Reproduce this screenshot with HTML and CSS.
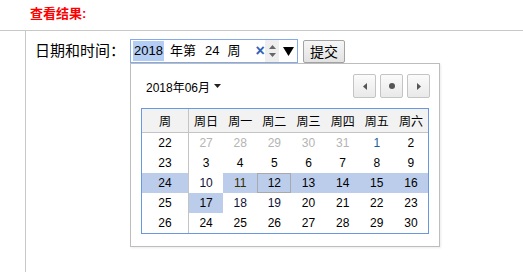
FILE: index.html
```html
<!DOCTYPE html>
<html>
<head>
<meta charset="utf-8">
<link rel="stylesheet" href="styles.css">
</head>
<body>
<div class="title">查看结果:</div>
<div class="content">
  <div class="form-row">
    <span class="label">日期和时间：</span>
    <div class="picker">
      <div class="input">
        <span class="seg sel">2018</span><span class="seg t1">年第</span><span class="seg t2">24</span><span class="seg t3">周</span>
        <span class="clear">×</span>
        <span class="spin"><svg width="9" height="14" viewBox="0 0 9 14"><path d="M4.5 1 L8 5 L1 5 Z" fill="#666"/><path d="M4.5 13 L8 9 L1 9 Z" fill="#666"/></svg></span>
        <span class="drop"><svg width="11" height="9" viewBox="0 0 11 9"><path d="M0 0 L11 0 L5.5 9 Z" fill="#000"/></svg></span>
      </div>
      <div class="popup">
        <div class="pop-head">
          <span class="month">2018年06月 <svg width="7" height="4" viewBox="0 0 7 4"><path d="M0 0 L7 0 L3.5 4 Z" fill="#222"/></svg></span>
          <div class="navs">
            <span class="nav"><svg width="4" height="7" viewBox="0 0 4 7"><path d="M4 0 L4 7 L0 3.5 Z" fill="#555"/></svg></span>
            <span class="nav"><svg width="6" height="6" viewBox="0 0 6 6"><circle cx="3" cy="3" r="3" fill="#555"/></svg></span>
            <span class="nav"><svg width="4" height="7" viewBox="0 0 4 7"><path d="M0 0 L0 7 L4 3.5 Z" fill="#555"/></svg></span>
          </div>
        </div>
        <table class="cal">
          <thead>
            <tr><th class="wk">周</th><th>周日</th><th>周一</th><th>周二</th><th>周三</th><th>周四</th><th>周五</th><th>周六</th></tr>
          </thead>
          <tbody>
            <tr><td class="wk">22</td><td class="other">27</td><td class="other">28</td><td class="other">29</td><td class="other">30</td><td class="other">31</td><td class="blue">1</td><td>2</td></tr>
            <tr><td class="wk">23</td><td>3</td><td>4</td><td>5</td><td>6</td><td>7</td><td>8</td><td>9</td></tr>
            <tr><td class="wk hl">24</td><td class="pur">10</td><td class="hl brn">11</td><td class="hl cur">12</td><td class="hl">13</td><td class="hl">14</td><td class="hl">15</td><td class="hl">16</td></tr>
            <tr><td class="wk">25</td><td class="hl">17</td><td class="pur">18</td><td class="pur">19</td><td>20</td><td>21</td><td>22</td><td>23</td></tr>
            <tr><td class="wk">26</td><td>24</td><td>25</td><td>26</td><td>27</td><td>28</td><td>29</td><td>30</td></tr>
          </tbody>
        </table>
      </div>
    </div>
    <button class="submit">提交</button>
  </div>
</div>
</body>
</html>
```
FILE: styles.css
```css
html, body {
  margin: 0;
  padding: 0;
  background: #fff;
  font-family: "Liberation Sans", "Noto Sans CJK SC", sans-serif;
  color: #000;
}
.title {
  height: 30px;
  line-height: 28px;
  padding-left: 30px;
  font-size: 13px;
  font-weight: bold;
  color: #f00;
  border-bottom: 1px solid #c8c8c8;
}
.content {
  margin-left: 25px;
  border-left: 1px solid #c8c8c8;
  height: 241px;
  padding: 8px 0 0 9px;
  box-sizing: border-box;
}
.form-row {
  display: flex;
  align-items: center;
  height: 24px;
}
.label {
  font-size: 15px;
  width: 95px;
  line-height: 24px;
  white-space: nowrap;
}
.picker {
  position: relative;
  width: 168px;
  height: 24px;
  flex-shrink: 0;
}
.input {
  box-sizing: border-box;
  width: 168px;
  height: 24px;
  border: 1px solid #86aae6;
  display: flex;
  align-items: center;
  font-size: 13px;
  padding-left: 2px;
  white-space: nowrap;
  overflow: hidden;
}
.input > span {
  flex-shrink: 0;
}
.seg {
  line-height: 20px;
}
.sel {
  background: #b3cdf4;
  padding: 0 1px;
}
.t1 { margin-left: 6px; }
.t2 { margin-left: 9px; }
.t3 { margin-left: 8px; }
.clear {
  margin-left: 15px;
  color: #2e62b8;
  font-weight: bold;
  font-size: 16px;
  line-height: 20px;
  width: 10px;
}
.spin {
  width: 14px;
  height: 22px;
  background: #eeeeee;
  display: flex;
  align-items: center;
  justify-content: center;
}
.drop {
  margin-left: 4px;
  display: flex;
  align-items: center;
}
.popup {
  position: absolute;
  left: 0;
  top: 24px;
  box-sizing: border-box;
  width: 310px;
  height: 184px;
  border: 1px solid #bdbdbd;
  background: #fff;
  box-shadow: 1px 1px 2px rgba(0,0,0,0.08);
  padding: 10px 9px 0 10px;
  z-index: 2;
}
.pop-head {
  display: flex;
  justify-content: space-between;
  align-items: center;
  height: 24px;
}
.month {
  font-size: 12px;
  padding-left: 5px;
  display: flex;
  align-items: center;
  gap: 4px;
}
.navs {
  display: flex;
  gap: 4px;
}
.nav {
  box-sizing: border-box;
  width: 23px;
  height: 24px;
  border: 1px solid #c4c4c4;
  border-radius: 2px;
  background: linear-gradient(#fbfbfb, #e9e9e9);
  display: flex;
  align-items: center;
  justify-content: center;
}
.cal {
  margin-top: 10px;
  width: 288px;
  border: 1px solid #6a98e0;
  border-collapse: separate;
  border-spacing: 0;
  table-layout: fixed;
  font-size: 12px;
}
.cal th {
  height: 24px;
  box-sizing: border-box;
  background: #f2f2f2;
  border-bottom: 1px solid #c4c4c4;
  font-weight: normal;
  padding: 0;
}
.cal td {
  height: 20px;
  padding: 0;
  text-align: center;
}
.cal .wk {
  width: 47px;
  border-right: 1px solid #c4c4c4;
}
.cal .other { color: #b4b4b4; }
.cal .blue { color: #1b5ea0; }
.cal .pur { color: #10103a; }
.cal .brn { color: #3a2a00; }
.cal .hl { background: #bccdeb; }
.cal .cur { box-shadow: inset 0 0 0 1px #a9a9a9; }
.submit {
  margin-left: 5px;
  box-sizing: border-box;
  width: 42px;
  height: 23px;
  padding: 0;
  border: 1px solid #a3a3a3;
  border-radius: 2px;
  background: linear-gradient(#f6f6f6, #e2e2e2);
  font-family: "Noto Sans CJK SC", sans-serif;
  font-size: 14px;
  color: #000;
}
```
